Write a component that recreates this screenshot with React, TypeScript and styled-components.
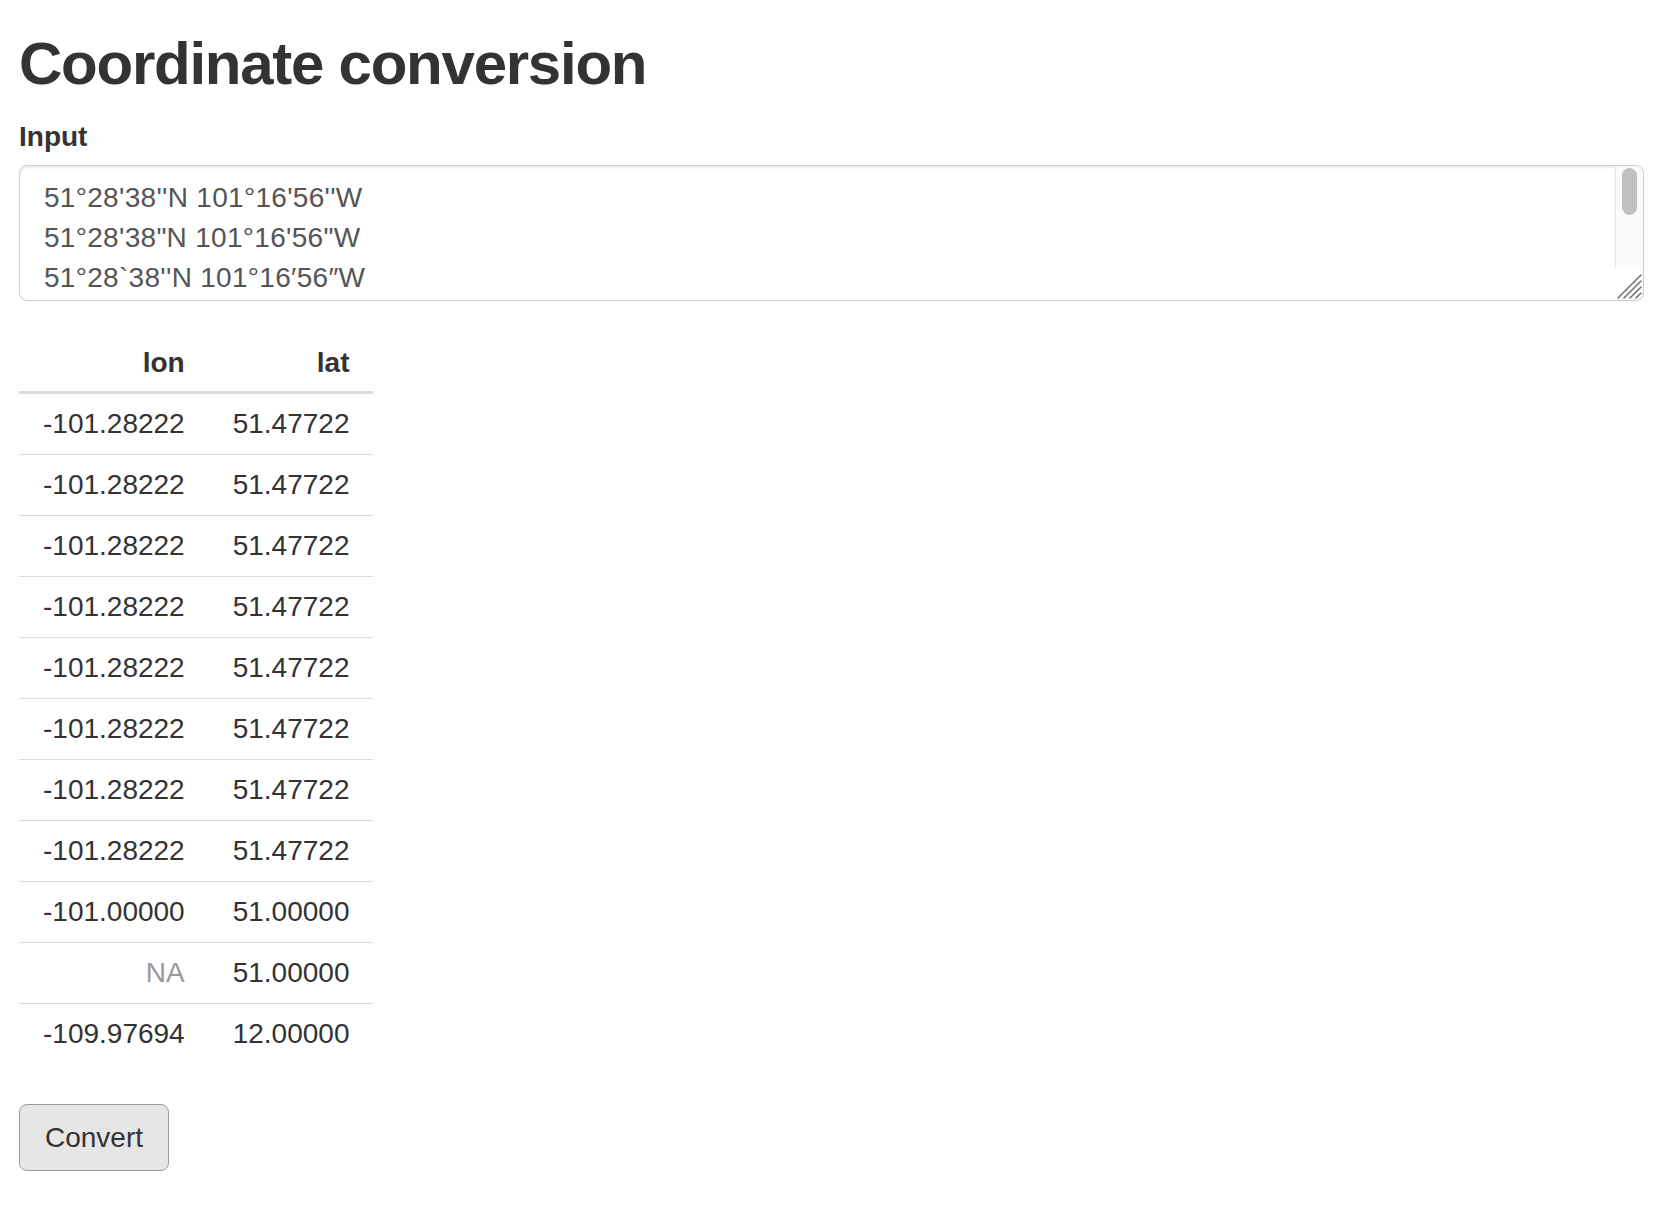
import React, { useState } from "react";
import styled, { createGlobalStyle } from "styled-components";

const GlobalStyle = createGlobalStyle`
  html, body {
    margin: 0;
    padding: 0;
    background: #ffffff;
  }
  body {
    font-family: "Liberation Sans", Arial, Helvetica, sans-serif;
    color: #333333;
  }
  * {
    box-sizing: border-box;
  }
`

const Page = styled.div`
  display: flex;
  flex-direction: column;
  align-items: flex-start;
  padding: 31px 16px 40px 19px;
`

const Title = styled.h2`
  margin: 0 0 20px;
  font-size: 60px;
  line-height: 66px;
  font-weight: bold;
  letter-spacing: -1.25px;
  color: #333333;
`

const FormGroup = styled.div`
  display: flex;
  flex-direction: column;
  align-self: stretch;
  margin-bottom: 30px;
`

const Label = styled.label`
  font-size: 28px;
  line-height: 40px;
  font-weight: bold;
  margin-bottom: 8px;
  color: #333333;
`

const AreaWrap = styled.div`
  position: relative;
  width: 100%;
  height: 136px;
  border: 1px solid #cccccc;
  border-radius: 8px;
  overflow: hidden;
  box-shadow: inset 0 2px 2px rgba(0, 0, 0, 0.075);
`

const Area = styled.textarea`
  display: block;
  width: 100%;
  height: 100%;
  margin: 0;
  padding: 12px 52px 12px 24px;
  font-family: "Liberation Sans", Arial, Helvetica, sans-serif;
  font-size: 28px;
  line-height: 40px;
  letter-spacing: 0.3px;
  color: #555555;
  background: transparent;
  border: none;
  resize: none;
  outline: none;
  scrollbar-width: none;
  &::-webkit-scrollbar {
    display: none;
  }
`

/* mac style scrollbar laid over the textarea's right edge */
const ScrollTrack = styled.div`
  position: absolute;
  top: 0;
  right: 0;
  bottom: 32px;
  width: 28px;
  background: #fafafa;
  border-left: 1px solid #e6e6e6;
  pointer-events: none;
`

const ScrollThumb = styled.div`
  position: absolute;
  top: 2px;
  left: 6px;
  width: 15px;
  height: 47px;
  border-radius: 8px;
  background: #c1c1c1;
`

const Grip = styled.svg`
  position: absolute;
  right: 1px;
  bottom: 1px;
  width: 26px;
  height: 26px;
  pointer-events: none;
`

const Table = styled.table`
  border-collapse: collapse;
  border-spacing: 0;
  margin-bottom: 40px;
`

const HeadCell = styled.th`
  padding: 12px 24px 8px;
  font-size: 28px;
  line-height: 40px;
  font-weight: bold;
  text-align: right;
  color: #333333;
  border-bottom: 3px solid #dddddd;
`

const Row = styled.tr`
  & + & td {
    border-top: 1px solid #dddddd;
  }
`

const Cell = styled.td<{ $na?: boolean }>`
  padding: 10px 24px;
  font-size: 28px;
  line-height: 40px;
  text-align: right;
  color: ${(p) => (p.$na ? "#999999" : "#333333")};
  white-space: nowrap;
`

const Button = styled.button`
  height: 67px;
  padding: 0 25px;
  font-family: "Liberation Sans", Arial, Helvetica, sans-serif;
  font-size: 28px;
  line-height: 40px;
  color: #333333;
  background: #e6e6e6;
  border: 1px solid #9a9a9a;
  border-radius: 8px;
  cursor: pointer;
`

const initialInput = [
  "51°28'38''N 101°16'56''W",
  '51°28\'38"N 101°16\'56"W',
  "51°28`38''N 101°16′56″W",
  "51°28′38″N 101°16′56″W",
  "51 28 38 N 101 16 56 W",
  "N51°28'38'' W101°16'56''",
  "51°28.6333'N 101°16.9333'W",
  "51.47722 -101.28222",
  "51 -101",
  "51",
  "12 -109°58'37''",
].join("\n");

type Coord = { lon: string; lat: string };

const rows: Coord[] = [
  { lon: "-101.28222", lat: "51.47722" },
  { lon: "-101.28222", lat: "51.47722" },
  { lon: "-101.28222", lat: "51.47722" },
  { lon: "-101.28222", lat: "51.47722" },
  { lon: "-101.28222", lat: "51.47722" },
  { lon: "-101.28222", lat: "51.47722" },
  { lon: "-101.28222", lat: "51.47722" },
  { lon: "-101.28222", lat: "51.47722" },
  { lon: "-101.00000", lat: "51.00000" },
  { lon: "NA", lat: "51.00000" },
  { lon: "-109.97694", lat: "12.00000" },
];

const App = () => {
  const [text, setText] = useState(initialInput);

  return (
    <>
      <GlobalStyle />
      <Page>
        <Title>Coordinate conversion</Title>
        <FormGroup>
          <Label htmlFor="coords">Input</Label>
          <AreaWrap>
            <Area
              id="coords"
              value={text}
              spellCheck={false}
              onChange={(e) => setText(e.target.value)}
            />
            <ScrollTrack>
              <ScrollThumb />
            </ScrollTrack>
            <Grip viewBox="0 0 26 26">
              <g stroke="#707070" strokeWidth="1.6" strokeLinecap="round">
                <line x1="2" y1="25" x2="25" y2="2" />
                <line x1="8" y1="25" x2="25" y2="8" />
                <line x1="14" y1="25" x2="25" y2="14" />
                <line x1="20" y1="25" x2="25" y2="20" />
              </g>
            </Grip>
          </AreaWrap>
        </FormGroup>
        <Table>
          <thead>
            <tr>
              <HeadCell>lon</HeadCell>
              <HeadCell>lat</HeadCell>
            </tr>
          </thead>
          <tbody>
            {rows.map((r, i) => (
              <Row key={i}>
                <Cell $na={r.lon === "NA"}>{r.lon}</Cell>
                <Cell $na={r.lat === "NA"}>{r.lat}</Cell>
              </Row>
            ))}
          </tbody>
        </Table>
        <Button type="button">Convert</Button>
      </Page>
    </>
  );
};

export default App;
